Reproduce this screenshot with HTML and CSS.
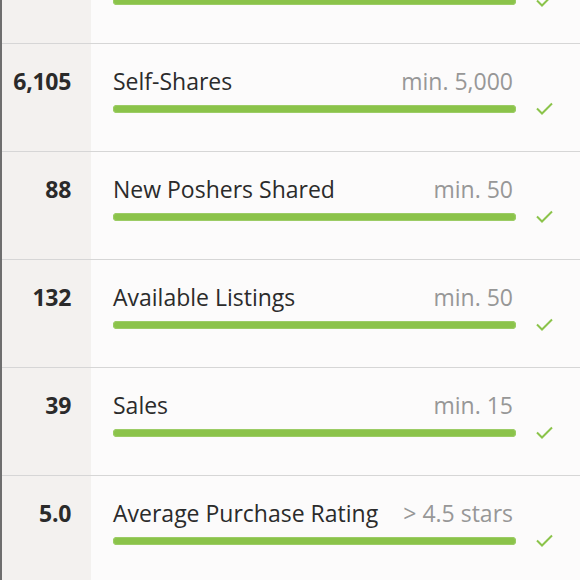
FILE: index.html
```html
<!DOCTYPE html>
<html>
<head>
<meta charset="utf-8">
<link rel="stylesheet" href="styles.css">
</head>
<body>
<div class="list">
  <div class="row">
    <div class="count"></div>
    <div class="detail">
      <div class="head"></div>
      <div class="track"><div class="bar"></div><svg class="check" viewBox="0 0 17 13"><path d="M1 6.5 L6 11.5 L16 1.5"/></svg></div>
    </div>
  </div>
  <div class="row">
    <div class="count">6,105</div>
    <div class="detail">
      <div class="head"><span class="label">Self-Shares</span><span class="req">min. 5,000</span></div>
      <div class="track"><div class="bar"></div><svg class="check" viewBox="0 0 17 13"><path d="M1 6.5 L6 11.5 L16 1.5"/></svg></div>
    </div>
  </div>
  <div class="row">
    <div class="count">88</div>
    <div class="detail">
      <div class="head"><span class="label">New Poshers Shared</span><span class="req">min. 50</span></div>
      <div class="track"><div class="bar"></div><svg class="check" viewBox="0 0 17 13"><path d="M1 6.5 L6 11.5 L16 1.5"/></svg></div>
    </div>
  </div>
  <div class="row">
    <div class="count">132</div>
    <div class="detail">
      <div class="head"><span class="label">Available Listings</span><span class="req">min. 50</span></div>
      <div class="track"><div class="bar"></div><svg class="check" viewBox="0 0 17 13"><path d="M1 6.5 L6 11.5 L16 1.5"/></svg></div>
    </div>
  </div>
  <div class="row">
    <div class="count">39</div>
    <div class="detail">
      <div class="head"><span class="label">Sales</span><span class="req">min. 15</span></div>
      <div class="track"><div class="bar"></div><svg class="check" viewBox="0 0 17 13"><path d="M1 6.5 L6 11.5 L16 1.5"/></svg></div>
    </div>
  </div>
  <div class="row">
    <div class="count">5.0</div>
    <div class="detail">
      <div class="head"><span class="label">Average Purchase Rating</span><span class="req">&gt; 4.5 stars</span></div>
      <div class="track"><div class="bar"></div><svg class="check" viewBox="0 0 17 13"><path d="M1 6.5 L6 11.5 L16 1.5"/></svg></div>
    </div>
  </div>
</div>
</body>
</html>
```
FILE: styles.css
```css
html, body {
  margin: 0;
  padding: 0;
  background: #fcfbfb;
  height: 100%;
  overflow: hidden;
}
body {
  font-family: "Open Sans", "Liberation Sans", sans-serif;
  border-left: 2px solid #6e6e6e;
  box-sizing: border-box;
}
.list {
  margin-top: -64px;
  display: flex;
  flex-direction: column;
}
.row {
  display: grid;
  grid-template-columns: 89px 1fr;
  height: 107px;
  border-bottom: 1px solid #d6d6d6;
}
.count {
  background: #f3f1ef;
  text-align: right;
  padding: 24px 20px 0 0;
  font-size: 23px;
  line-height: 26px;
  font-weight: 700;
  letter-spacing: -0.3px;
  color: #2a2a2a;
}
.detail {
  padding: 24px 27px 0 22px;
}
.head {
  display: flex;
  justify-content: space-between;
  align-items: baseline;
  height: 26px;
  padding-right: 40px;
  font-size: 23px;
  line-height: 26px;
  font-weight: 500;
}
.label {
  color: #2b2b2b;
}
.req {
  color: #979797;
}
.track {
  display: flex;
  align-items: flex-start;
  margin-top: 11px;
}
.bar {
  flex: 1;
  height: 8px;
  border-radius: 4px;
  background: #8bc34a;
  box-shadow: inset 0 0 0 1px #9ccc65;
}
.check {
  width: 17px;
  height: 13px;
  margin: -3px 0 0 20px;
  fill: none;
  stroke: #8bc34a;
  stroke-width: 2;
}
```
